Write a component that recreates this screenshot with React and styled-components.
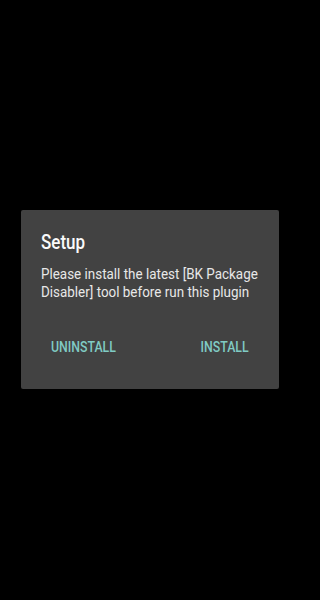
import React from 'react';
import styled, { createGlobalStyle } from 'styled-components';

const GlobalStyle = createGlobalStyle`
  html, body {
    margin: 0;
    padding: 0;
    background: #000;
  }
  #root {
    min-height: 100vh;
  }
`;

const Screen = styled.div`
  width: 300px;
  height: 600px;
  background: #000;
  display: flex;
  flex-direction: column;
  align-items: center;
  padding-top: 210px;
  box-sizing: border-box;
  font-family: Roboto, 'Noto Sans', sans-serif;
  overflow: hidden;
`;

const Dialog = styled.div`
  width: 258px;
  height: 179px;
  background: #424242;
  border-radius: 2px;
  box-sizing: border-box;
  padding: 20px 20px 0 20px;
  display: flex;
  flex-direction: column;
`;

// the source UI is drawn a bit narrow, so glyphs are squeezed horizontally
const Title = styled.h2`
  margin: 0;
  font-size: 20px;
  font-weight: 500;
  line-height: 24px;
  color: #fafafa;
  transform: scaleX(0.85);
  transform-origin: left center;
`;

const Message = styled.p`
  margin: 11px 0 0 0;
  width: 248px;
  font-size: 15px;
  line-height: 18px;
  color: #e8e8e8;
  transform: scaleX(0.895);
  transform-origin: left top;
`;

const Actions = styled.div`
  display: flex;
  justify-content: space-between;
  padding: 0 10px;
  margin-top: 38px;
`;

const ActionButton = styled.button`
  background: none;
  border: none;
  padding: 0;
  font-family: inherit;
  font-size: 14px;
  line-height: 16px;
  font-weight: 500;
  color: #80cbc4;
  text-transform: uppercase;
  cursor: pointer;
  transform: scaleX(0.88);
  transform-origin: ${(p) => (p.$end ? 'right' : 'left')} center;
`;

const App = () => {
  return (
    <>
      <GlobalStyle />
      <Screen>
        <Dialog>
          <Title>Setup</Title>
          <Message>
            Please install the latest [BK Package Disabler] tool before run this plugin
          </Message>
          <Actions>
            <ActionButton>Uninstall</ActionButton>
            <ActionButton $end>Install</ActionButton>
          </Actions>
        </Dialog>
      </Screen>
    </>
  );
};

export default App;
